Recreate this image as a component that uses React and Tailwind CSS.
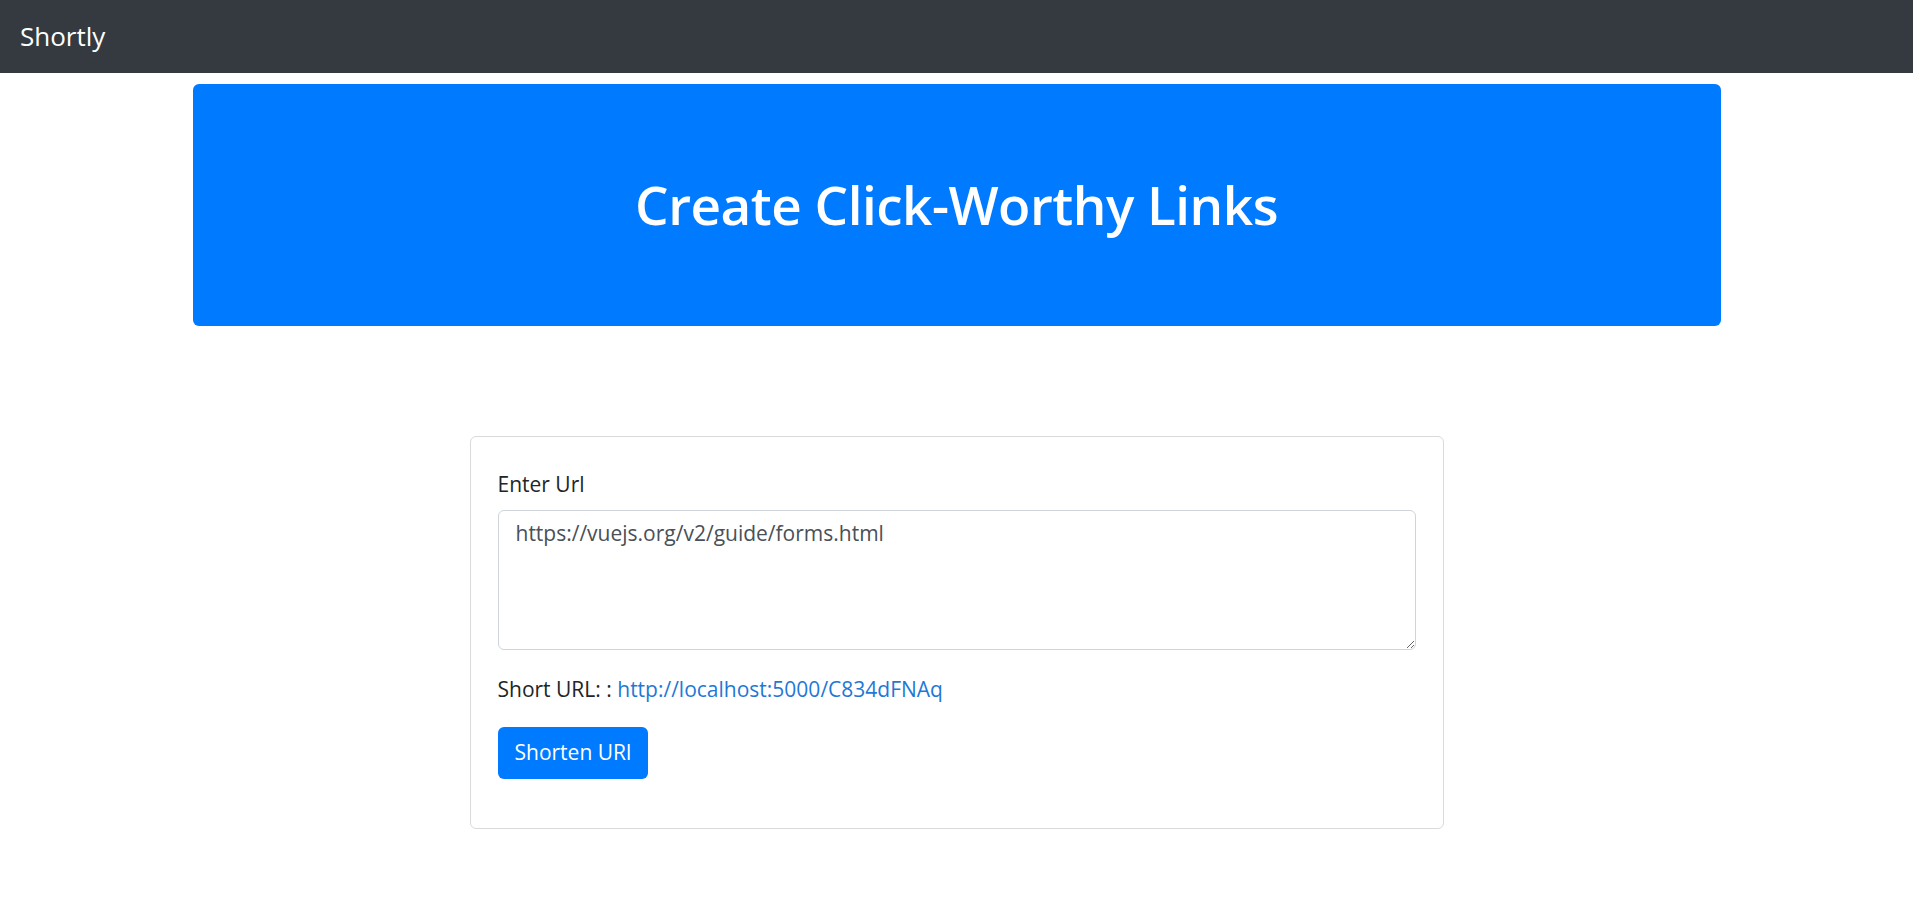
import React, { useState } from "react";

export default function App() {
  const [url, setUrl] = useState("https://vuejs.org/v2/guide/forms.html");

  return (
    <div className="min-h-screen bg-white font-['Open_Sans',sans-serif] text-[#212529]">
      <nav className="h-[73px] bg-[#343a40] flex items-center px-5">
        <span className="text-white text-[26px]">Shortly</span>
      </nav>

      <div className="w-[1528px] mx-auto mt-[11px]">
        <div className="h-[242px] bg-[#007bff] rounded-md flex items-center justify-center">
          <h1 className="text-white text-[53px] font-semibold tracking-[-0.5px]">
            Create Click-Worthy Links
          </h1>
        </div>
      </div>

      <div className="w-[974px] mx-auto mt-[110px] border border-[#dadada] rounded-md px-[27px] pt-[27px] pb-[49px]">
        <label className="block text-[21px] leading-[40px]">Enter Url</label>
        <textarea
          value={url}
          onChange={(e) => setUrl(e.target.value)}
          className="mt-[6px] block w-full h-[140px] border border-[#ced4da] rounded-md px-[17px] py-[7px] text-[21px] text-[#495057] outline-none"
        />
        <p className="mt-[19px] text-[21px] leading-[40px]">
          Short URL: :{" "}
          <a href="#" className="text-[#1f78d6]">
            http://localhost:5000/C834dFNAq
          </a>
        </p>
        <button className="mt-[18px] h-[52px] px-[17px] bg-[#007bff] text-white text-[21px] rounded-md">
          Shorten URl
        </button>
      </div>
    </div>
  );
}
